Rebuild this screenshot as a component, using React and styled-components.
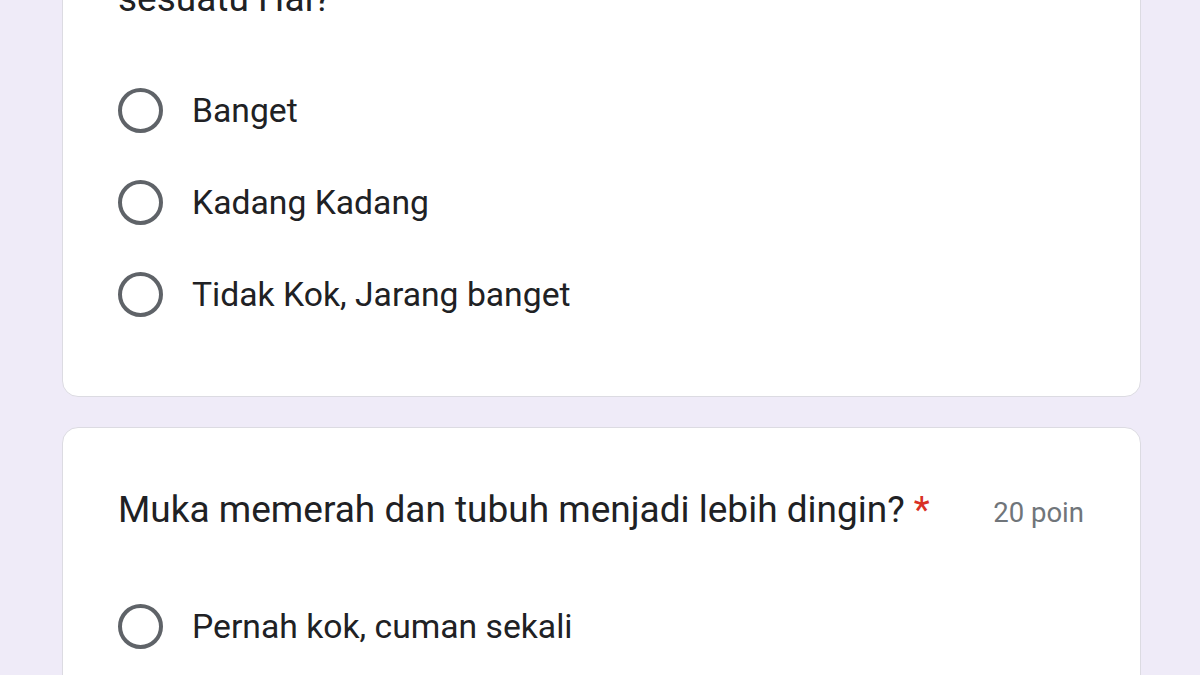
import React from 'react';
import styled, { createGlobalStyle } from 'styled-components';

const GlobalStyle = createGlobalStyle`
  html, body {
    margin: 0;
    padding: 0;
    height: 675px;
    overflow: hidden;
    background: #efebf8;
    font-family: Roboto, "Noto Sans", Arial, sans-serif;
    color: #202124;
  }
`;

const Page = styled.div`
  display: flex;
  flex-direction: column;
  gap: 30px;
  padding: 0 59px 0 62px;
  margin-top: -26px;
`;

const Card = styled.section`
  background: #fff;
  border: 1px solid #dcdbe2;
  border-radius: 16px;
  padding: ${p => (p.$cut ? '0' : '58px')} 56px 56px 55px;
`;

const QuestionRow = styled.div`
  display: flex;
  align-items: baseline;
  justify-content: space-between;
  margin-bottom: ${p => (p.$cut ? '41px' : '46px')};
`;

const Question = styled.h2`
  margin: 0;
  font-size: 37px;
  font-weight: 400;
  line-height: 48px;
  color: #202124;
`;

const Required = styled.span`
  color: #d93025;
  margin-left: 9px;
`;

const Points = styled.span`
  font-size: 27.5px;
  color: #70757a;
  white-space: nowrap;
`;

const Options = styled.div`
  display: flex;
  flex-direction: column;
`;

const Option = styled.label`
  display: flex;
  align-items: center;
  gap: 29px;
  height: 92px;
  font-size: 33.7px;
  color: #202124;
  cursor: pointer;
`;

const Radio = styled.span`
  box-sizing: border-box;
  width: 45px;
  height: 45px;
  border: 4px solid #5f6368;
  border-radius: 50%;
  flex-shrink: 0;
`;

const questions = [
  {
    text: 'sesuatu Hal?',
    cut: true,
    options: ['Banget', 'Kadang Kadang', 'Tidak Kok, Jarang banget'],
  },
  {
    text: 'Muka memerah dan tubuh menjadi lebih dingin?',
    required: true,
    points: '20 poin',
    options: ['Pernah kok, cuman sekali', 'Sering', 'Tidak pernah'],
  },
];

const App = () => (
  <>
    <GlobalStyle />
    <Page>
      {questions.map((q, i) => (
        <Card key={i} $cut={q.cut}>
          <QuestionRow $cut={q.cut}>
            <Question>
              {q.text}
              {q.required && <Required>*</Required>}
            </Question>
            {q.points && <Points>{q.points}</Points>}
          </QuestionRow>
          <Options>
            {q.options.map(opt => (
              <Option key={opt}>
                <Radio />
                {opt}
              </Option>
            ))}
          </Options>
        </Card>
      ))}
    </Page>
  </>
);

export default App;
